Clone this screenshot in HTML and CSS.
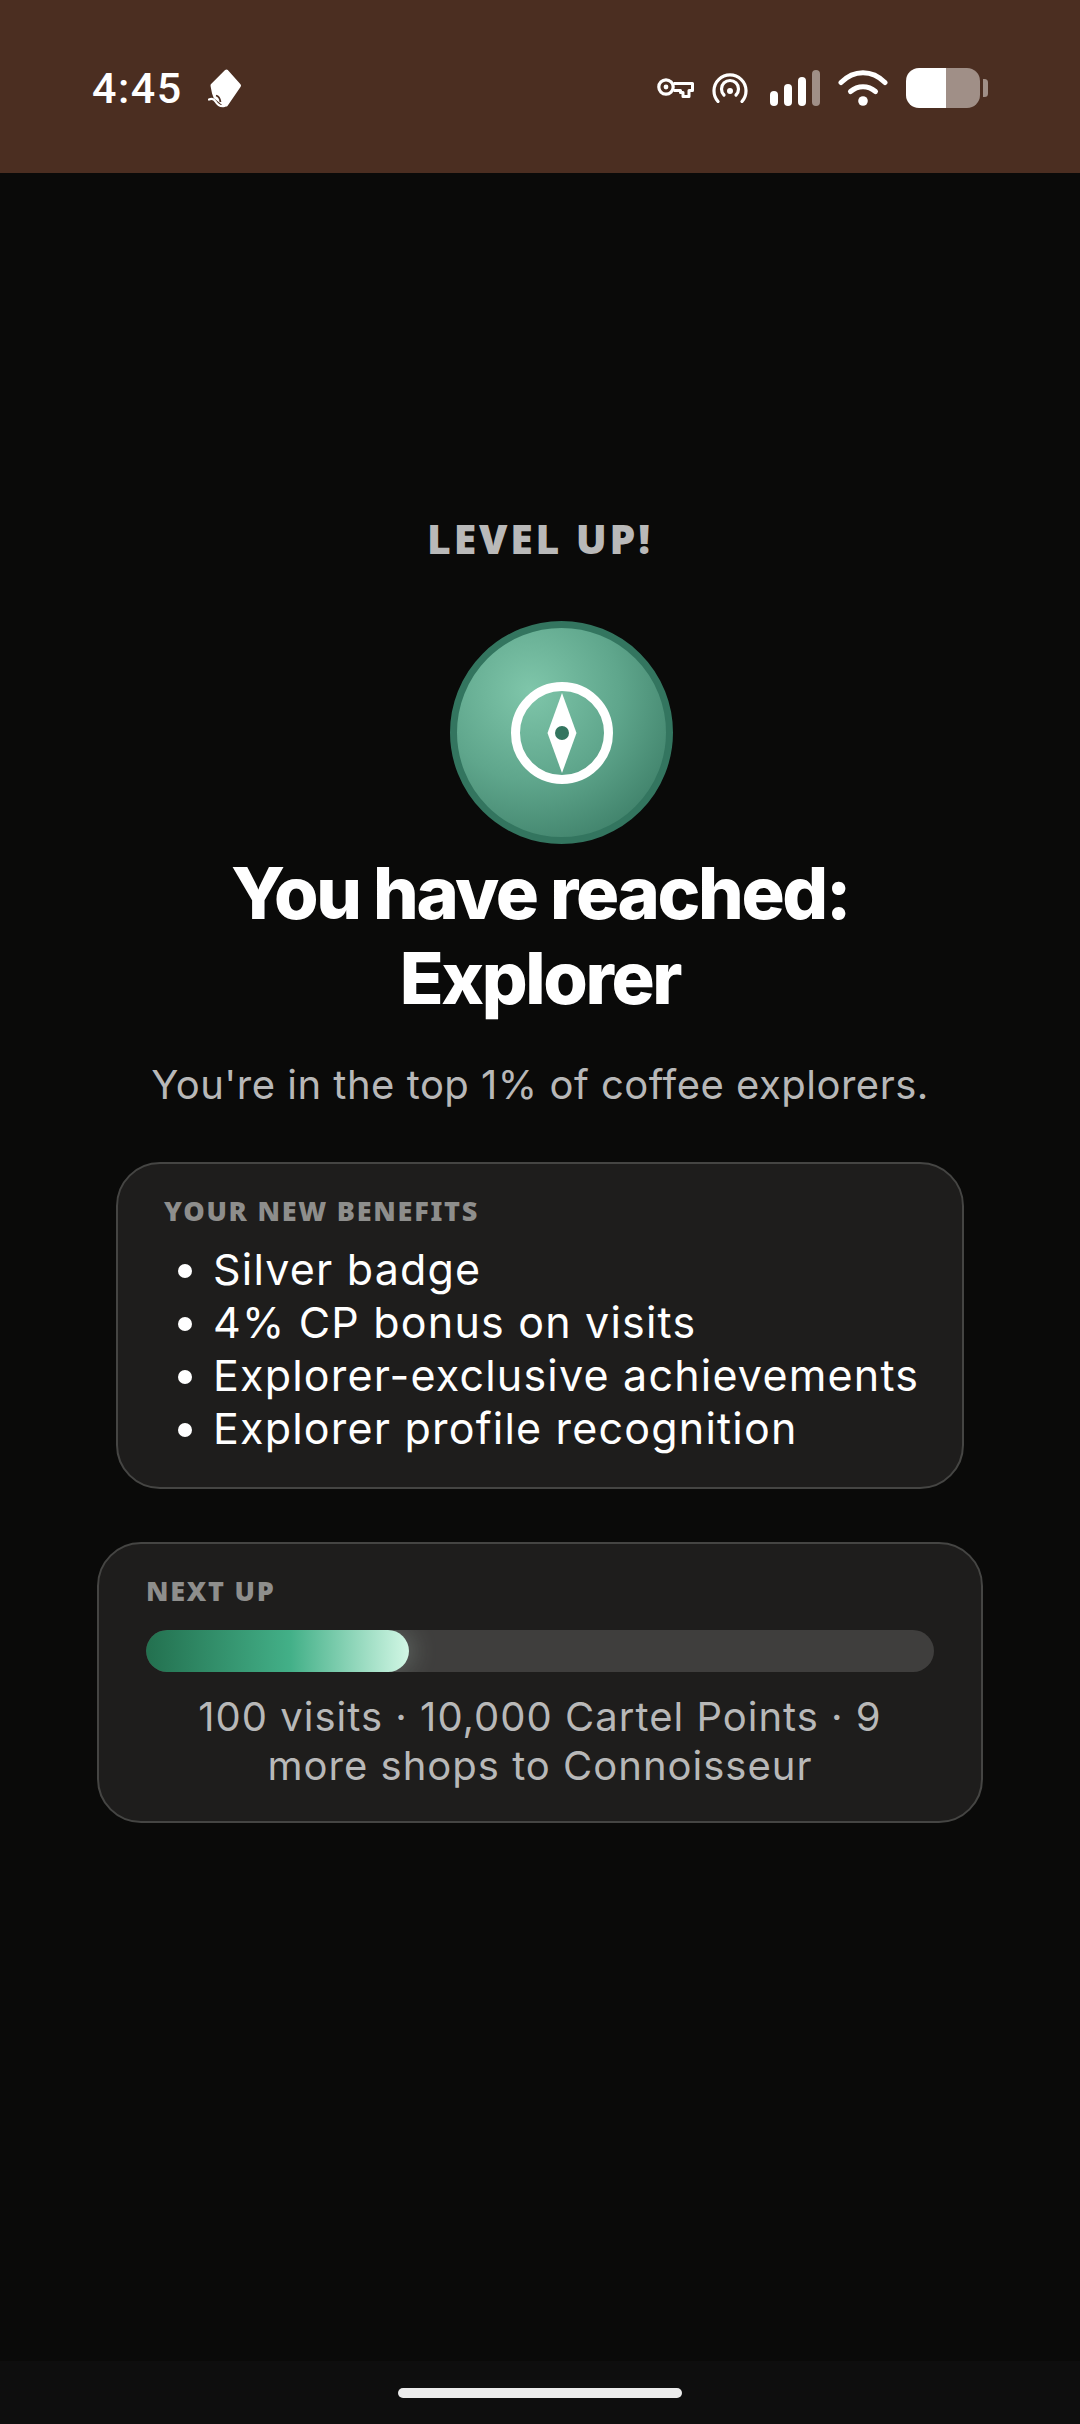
FILE: index.html
```html
<!DOCTYPE html>
<html lang="en">
<head>
<meta charset="utf-8">
<title>Level up</title>
<link rel="stylesheet" href="styles.css">
</head>
<body>
<div class="screen">
  <header class="status">
    <div class="status-left">
      <span class="time">4:45</span>
      <svg class="ic-pen" viewBox="0 0 34 40" width="34" height="40"><path d="M18.500 3.500 31 17.500 18 36.500 16 36 7.500 29 6 25 4.500 17.500z" fill="#fff" stroke="#fff" stroke-width="4" stroke-linejoin="round"/><path d="M1 31.500c3-1.500 5-.5 6.500 2s4 5.500 9 4.500" fill="none" stroke="#fff" stroke-width="2.200" stroke-linecap="round"/><path d="M8 27.500c2 .5 4 3 4.500 6.500" fill="none" stroke="#4b2e21" stroke-width="1.800"/></svg>
    </div>
    <div class="status-right">
      <svg class="ic-key" viewBox="0 0 37 20" width="37" height="20"><circle cx="9" cy="9" r="7.200" fill="none" stroke="#fff" stroke-width="3.200"/><circle cx="9" cy="9" r="2.400" fill="#fff"/><path d="M16.500 5.500H35.500V12.500H32V18.500H26V14.500H23.500V12.500H16.500" fill="none" stroke="#fff" stroke-width="3" stroke-linejoin="round"/></svg>
      <svg class="ic-hot" viewBox="0 0 36 30" width="36" height="30"><path d="M6 28.500a16 16 0 1 1 24 0" fill="none" stroke="#fff" stroke-width="3.200" stroke-linecap="round"/><path d="M12 22a8.500 8.500 0 1 1 12 0" fill="none" stroke="#fff" stroke-width="3.200" stroke-linecap="round"/><circle cx="18" cy="18" r="3" fill="#fff"/></svg>
      <svg class="ic-sig" viewBox="0 0 50 36" width="50" height="36"><rect x="0" y="21" width="8" height="15" rx="4" fill="#fff"/><rect x="14" y="14" width="8" height="22" rx="4" fill="#fff"/><rect x="28" y="7" width="8" height="29" rx="4" fill="#fff"/><rect x="42" y="0" width="8" height="36" rx="4" fill="#a08f87"/></svg>
      <svg class="ic-wifi" viewBox="0 0 50 36" width="50" height="36"><path d="M3 12.500C16-.5 34-.5 47 12.500" fill="none" stroke="#fff" stroke-width="5" stroke-linecap="round"/><path d="M12.500 21.500c7.500-6.500 17.500-6.500 25 0" fill="none" stroke="#fff" stroke-width="5" stroke-linecap="round"/><circle cx="25" cy="31" r="4.800" fill="#fff"/></svg>
      <svg class="ic-bat" viewBox="0 0 82 40" width="82" height="40"><path d="M13 0h27v40H13A13 13 0 0 1 0 27V13A13 13 0 0 1 13 0z" fill="#fff"/><path d="M40 0h21a13 13 0 0 1 13 13v14a13 13 0 0 1-13 13H40z" fill="#a08f87"/><path d="M77 11h1.500a3.500 3.500 0 0 1 3.500 3.500v11a3.500 3.500 0 0 1-3.500 3.500H77z" fill="#a08f87"/></svg>
    </div>
  </header>

  <main class="main">
    <p class="eyebrow">LEVEL UP!</p>
    <div class="badge">
      <svg viewBox="0 0 102 102" width="102" height="102"><circle cx="51" cy="51" r="46.500" fill="none" stroke="#fff" stroke-width="9"/><path d="M51 11 65.500 51 51 91 36.500 51z" fill="#fff"/><circle cx="51" cy="51" r="7" fill="#33755f"/></svg>
    </div>
    <h1 class="title">You have reached:<br>Explorer</h1>
    <p class="sub">You're in the top 1% of coffee explorers.</p>

    <section class="card benefits">
      <h2 class="label">YOUR NEW BENEFITS</h2>
      <ul class="list">
        <li>Silver badge</li>
        <li>4% CP bonus on visits</li>
        <li>Explorer-exclusive achievements</li>
        <li>Explorer profile recognition</li>
      </ul>
    </section>

    <section class="card next">
      <h2 class="label">NEXT UP</h2>
      <div class="track"><div class="fill"></div></div>
      <p class="next-text">100 visits · 10,000 Cartel Points · 9<br>more shops to Connoisseur</p>
    </section>
  </main>

  <footer class="nav"><span class="handle"></span></footer>
</div>
</body>
</html>
```

FILE: styles.css
```css
* { box-sizing: border-box; }
html, body { margin: 0; padding: 0; background: #0a0a09; }
.screen {
  width: 1080px; height: 2424px; overflow: hidden;
  display: flex; flex-direction: column;
  font-family: "Inter", "Noto Sans", sans-serif;
}
.status {
  height: 173px; flex: none; background: #4b2e21;
  display: flex; justify-content: space-between; align-items: center;
  padding: 3px 92px 0 92px;
}
.status-left { display: flex; align-items: center; gap: 25px; }
.time { font-family: "Roboto", sans-serif; font-weight: 500; font-size: 43px; line-height: 48px; letter-spacing: 1.5px; color: #fff; }
.status-right { display: flex; align-items: center; gap: 18px; }
.status-right svg, .status-left svg { display: block; }
.ic-sig { margin-left: 4px; }
.main {
  flex: 1; display: flex; flex-direction: column; align-items: center;
  padding-top: 336px;
}
.eyebrow {
  margin: 0; font-family: "Noto Sans", sans-serif; font-weight: 900;
  font-size: 41px; line-height: 58px; letter-spacing: 2.800px; color: #b9b9b9;
}
.badge {
  width: 223px; height: 223px; border-radius: 50%; margin: 54px 0 0 43px;
  border: 7px solid #33755f;
  background: radial-gradient(circle at 35% 30%, #7fc6aa 0%, #5fa68c 45%, #35755f 95%);
  display: flex; align-items: center; justify-content: center;
}
.badge svg { display: block; }
.title {
  margin: 6px 0 0; text-align: center; color: #fff;
  font-weight: 800; font-size: 72px; line-height: 85px; letter-spacing: -2.350px;
}
.sub { margin: 39px 0 0; font-size: 40px; line-height: 52px; color: #b8b8b8; letter-spacing: .5px; }
.card {
  background: #1e1d1c; border: 2.500px solid #454543; border-radius: 44px;
}
.label {
  margin: 0; font-family: "Noto Sans", sans-serif; font-weight: 900;
  font-size: 27px; line-height: 36px; letter-spacing: 1.750px; color: #8e8e8c;
}
.benefits { width: 848px; height: 327px; margin-top: 51px; padding: 29px 20px 0 46px; }
.list {
  margin: 14px 0 0; padding: 0 0 0 49px; list-style: disc; color: #fff;
  font-size: 43px; line-height: 53px; letter-spacing: 1.200px; white-space: nowrap;
}
.next { width: 886px; height: 281px; margin-top: 53px; padding: 29px 47px 0; }
.track { height: 42px; border-radius: 21px; background: #3f3e3d; margin-top: 21px; overflow: hidden; }
.fill {
  width: 33.400%; height: 100%; border-radius: 21px;
  background: linear-gradient(90deg, #23704f 0%, #43b088 55%, #d2f7e5 100%);
  box-shadow: 6px 0 24px rgba(210, 247, 229, .2);
}
.next-text { margin: 20px 0 0; text-align: center; color: #b8b8b8; font-size: 40px; line-height: 49px; letter-spacing: 1px; }
.nav { height: 63px; flex: none; background: #0e0e0e; display: flex; justify-content: center; padding-top: 27px; }
.handle { width: 284px; height: 10px; border-radius: 5px; background: #ebebeb; display: block; }
```
